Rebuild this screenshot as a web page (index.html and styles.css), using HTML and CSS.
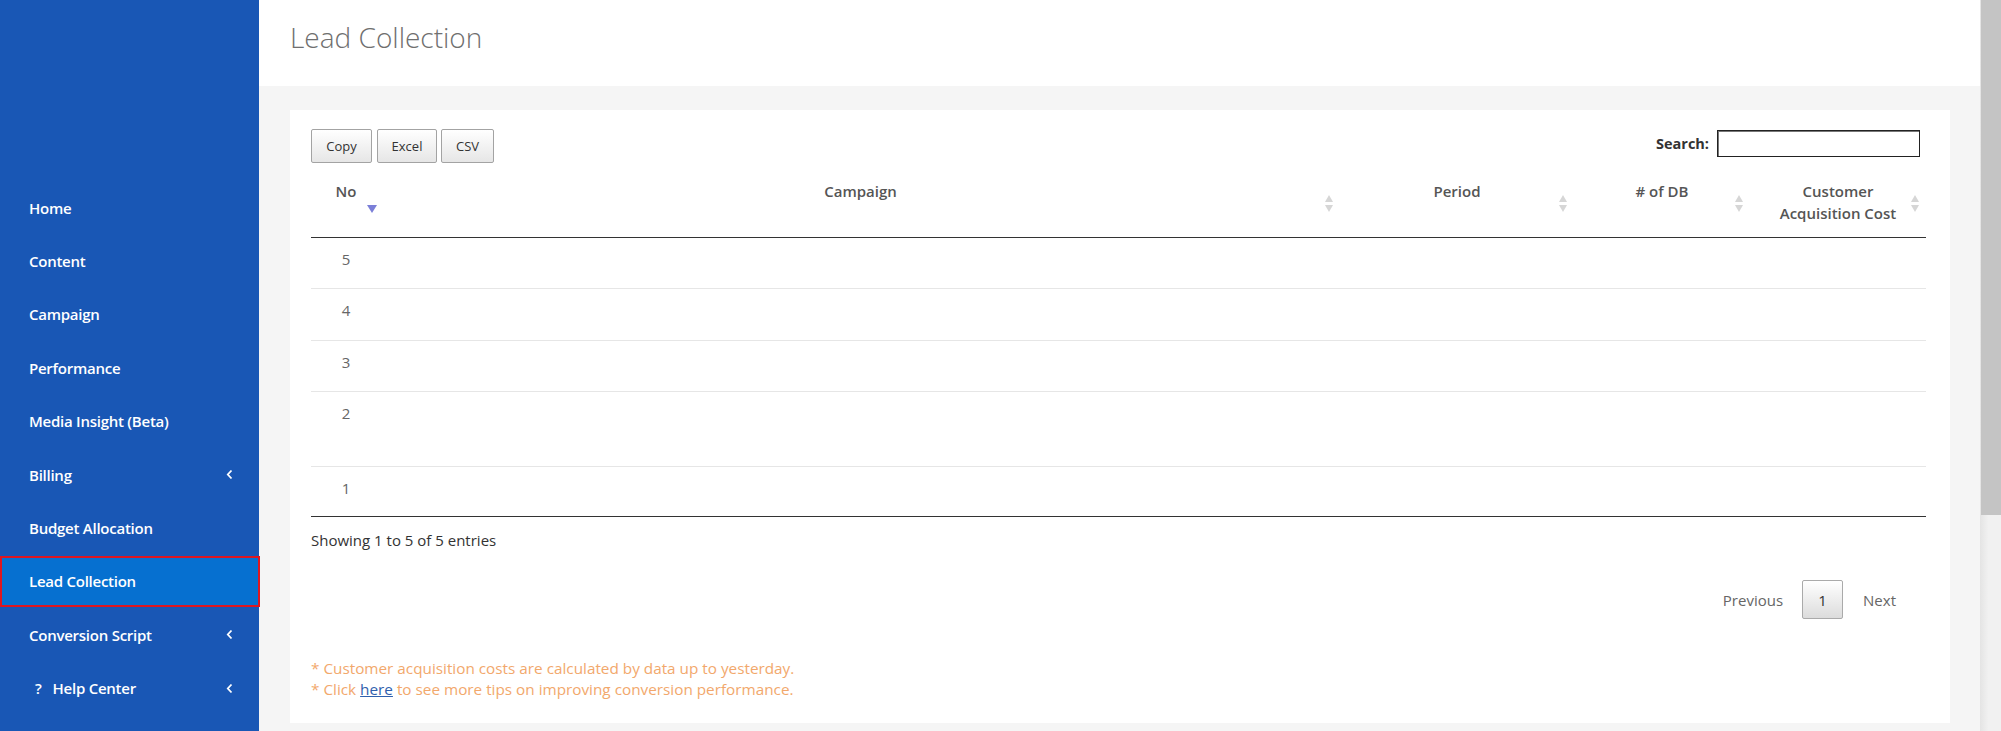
FILE: index.html
```html
<!DOCTYPE html>
<html>
<head>
<meta charset="utf-8">
<title>Lead Collection</title>
<link rel="stylesheet" href="styles.css">
</head>
<body>
<div class="app">
  <aside class="sidebar">
    <nav class="nav">
      <a class="nav-item">Home</a>
      <a class="nav-item">Content</a>
      <a class="nav-item">Campaign</a>
      <a class="nav-item">Performance</a>
      <a class="nav-item">Media Insight (Beta)</a>
      <a class="nav-item">Billing<svg class="chev" viewBox="0 0 7 11" width="7" height="11"><path d="M5.5 1.5 L1.8 5.5 L5.5 9.5" fill="none" stroke="#fff" stroke-width="1.8"/></svg></a>
      <a class="nav-item">Budget Allocation</a>
      <a class="nav-item active">Lead Collection</a>
      <a class="nav-item">Conversion Script<svg class="chev" viewBox="0 0 7 11" width="7" height="11"><path d="M5.5 1.5 L1.8 5.5 L5.5 9.5" fill="none" stroke="#fff" stroke-width="1.8"/></svg></a>
      <a class="nav-item"><span class="q">?</span>Help Center<svg class="chev" viewBox="0 0 7 11" width="7" height="11"><path d="M5.5 1.5 L1.8 5.5 L5.5 9.5" fill="none" stroke="#fff" stroke-width="1.8"/></svg></a>
    </nav>
  </aside>
  <main class="main">
    <header class="page-header">
      <h1 class="title">Lead Collection</h1>
    </header>
    <section class="content">
      <div class="card">
        <div class="toolbar">
          <div class="btns">
            <button class="btn btn-copy">Copy</button>
            <button class="btn btn-excel">Excel</button>
            <button class="btn btn-csv">CSV</button>
          </div>
          <label class="search">Search: <input class="search-input" type="text"></label>
        </div>
        <table class="grid">
          <colgroup>
            <col class="c-no"><col class="c-camp"><col class="c-period"><col class="c-db"><col class="c-cac">
          </colgroup>
          <thead>
            <tr>
              <th>No<span class="sort-desc"></span></th>
              <th>Campaign<span class="sort"></span></th>
              <th>Period<span class="sort"></span></th>
              <th># of DB<span class="sort"></span></th>
              <th>Customer Acquisition Cost<span class="sort"></span></th>
            </tr>
          </thead>
          <tbody>
            <tr class="r1"><td>5</td><td></td><td></td><td></td><td></td></tr>
            <tr class="r2"><td>4</td><td></td><td></td><td></td><td></td></tr>
            <tr class="r3"><td>3</td><td></td><td></td><td></td><td></td></tr>
            <tr class="r4"><td>2</td><td></td><td></td><td></td><td></td></tr>
            <tr class="r5"><td>1</td><td></td><td></td><td></td><td></td></tr>
          </tbody>
        </table>
        <div class="info">Showing 1 to 5 of 5 entries</div>
        <div class="pager">
          <span class="pg-link">Previous</span>
          <span class="pg-btn">1</span>
          <span class="pg-link">Next</span>
        </div>
        <div class="notes">
          <p>* Customer acquisition costs are calculated by data up to yesterday.</p>
          <p>* Click <a class="here">here</a> to see more tips on improving conversion performance.</p>
        </div>
      </div>
    </section>
  </main>
  <div class="scrollbar"><div class="thumb"></div></div>
</div>
</body>
</html>
```
FILE: styles.css
```css
* { box-sizing: border-box; }
html, body { margin: 0; padding: 0; }
body {
  width: 2001px;
  height: 731px;
  overflow: hidden;
  font-family: "Open Sans", "Noto Sans", sans-serif;
  background: #f5f5f5;
}
.app { display: flex; height: 731px; }

.sidebar {
  width: 259px;
  flex: 0 0 259px;
  background: #1957b5;
  padding-top: 181px;
}
.nav { display: flex; flex-direction: column; }
.nav-item {
  height: 53.4px;
  display: flex;
  align-items: center;
  padding: 0 26px 0 29px;
  color: #fff;
  font-size: 15px;
  font-weight: 600;
  letter-spacing: -0.25px;
  cursor: pointer;
}
.nav-item.active {
  height: 51px;
  margin: 1.2px -1px 1.2px 0;
  background: #0670d0;
  border: 2px solid #de1620;
  padding-left: 27px;
}
.chev { margin-left: auto; }
.q { margin: 0 11px 0 6px; }

.main { flex: 1; display: flex; flex-direction: column; min-width: 0; }
.page-header { height: 86px; background: #fff; padding: 18px 0 0 31px; }
.title {
  margin: 0;
  font-size: 28px;
  font-weight: 300;
  color: #6f6f6f;
  line-height: normal;
}
.content { flex: 1; padding: 24px 30px 0 31px; }
.card {
  background: #fff;
  height: 613px;
  padding: 19px 24px 0 21px;
}

.toolbar { display: flex; justify-content: space-between; align-items: flex-start; height: 34px; }
.btns { display: flex; gap: 4px; }
.btn {
  height: 34px;
  border: 1px solid #a3a3a3;
  border-radius: 2px;
  background: linear-gradient(#ffffff, #e6e6e6);
  font-family: "Open Sans", sans-serif;
  font-size: 13px;
  color: #333;
  padding: 0;
}
.btn-copy { width: 61px; margin-right: 1px; }
.btn-excel { width: 60px; }
.btn-csv { width: 53px; }
.search {
  display: flex;
  align-items: center;
  margin-top: 1px;
  margin-right: 6px;
  font-size: 14.5px;
  font-weight: 700;
  color: #333;
}
.search-input {
  width: 203px;
  height: 27px;
  margin-left: 8px;
  border: 1px solid #222;
  box-shadow: inset 1px 1px 0 #777;
  background: #fff;
}

.grid {
  width: 100%;
  table-layout: fixed;
  border-collapse: collapse;
  margin-top: 7px;
}
.c-no { width: 70px; }
.c-camp { width: 959px; }
.c-period { width: 234px; }
.c-db { width: 176px; }
.c-cac { width: 176px; }
.grid th {
  position: relative;
  vertical-align: top;
  padding: 10px 16px 13px;
  font-size: 15px;
  font-weight: 600;
  line-height: 22px;
  color: #555;
  text-align: center;
  border-bottom: 1px solid #333;
}
.sort {
  position: absolute;
  right: 7px;
  top: 50%;
  width: 8px;
  height: 17px;
  margin-top: -9px;
}
.sort::before, .sort::after {
  content: "";
  position: absolute;
  left: 0;
  border-left: 4px solid transparent;
  border-right: 4px solid transparent;
}
.sort::before { top: 0; border-bottom: 7px solid #d6d6d6; }
.sort::after { bottom: 0; border-top: 7px solid #d6d6d6; }
.sort-desc {
  position: absolute;
  right: 4px;
  top: 50%;
  margin-top: 1px;
  border-left: 5px solid transparent;
  border-right: 5px solid transparent;
  border-top: 8px solid #7b7fd8;
}
.grid td {
  vertical-align: top;
  padding: 11px 10px 0;
  font-size: 15px;
  line-height: 20px;
  color: #666;
  text-align: center;
  border-top: 1px solid #e6e6e6;
}
.grid thead + tbody tr:first-child td { border-top: 0; }
.grid tbody tr:last-child td { border-bottom: 1px solid #333; }
.r1 { height: 51px; }
.r2 { height: 52px; }
.r3 { height: 51px; }
.r4 { height: 75px; }
.r5 { height: 50px; }

.info {
  margin-top: 13px;
  font-size: 15px;
  line-height: 20px;
  color: #333;
}
.pager {
  display: flex;
  justify-content: flex-end;
  align-items: center;
  margin-top: 30px;
  padding-right: 30px;
  height: 39px;
}
.pg-link { font-size: 15px; color: #666; }
.pg-btn {
  width: 41px;
  height: 39px;
  margin: 0 20px 0 19px;
  display: flex;
  align-items: center;
  justify-content: center;
  border: 1px solid #aaa;
  border-radius: 2px;
  background: linear-gradient(#ffffff, #dcdcdc);
  font-size: 15px;
  color: #333;
}
.notes { margin-top: 39px; }
.notes p {
  margin: 0;
  font-size: 15.3px;
  line-height: 21px;
  color: #f2a86c;
}
.here { color: #2f60ad; text-decoration: underline; }

.scrollbar {
  width: 21px;
  flex: 0 0 21px;
  background: linear-gradient(to right, #e4e4e4, #f1f1f1 40%);
}
.thumb { height: 515px; margin-left: 1px; background: #c4c4c4; }
```
